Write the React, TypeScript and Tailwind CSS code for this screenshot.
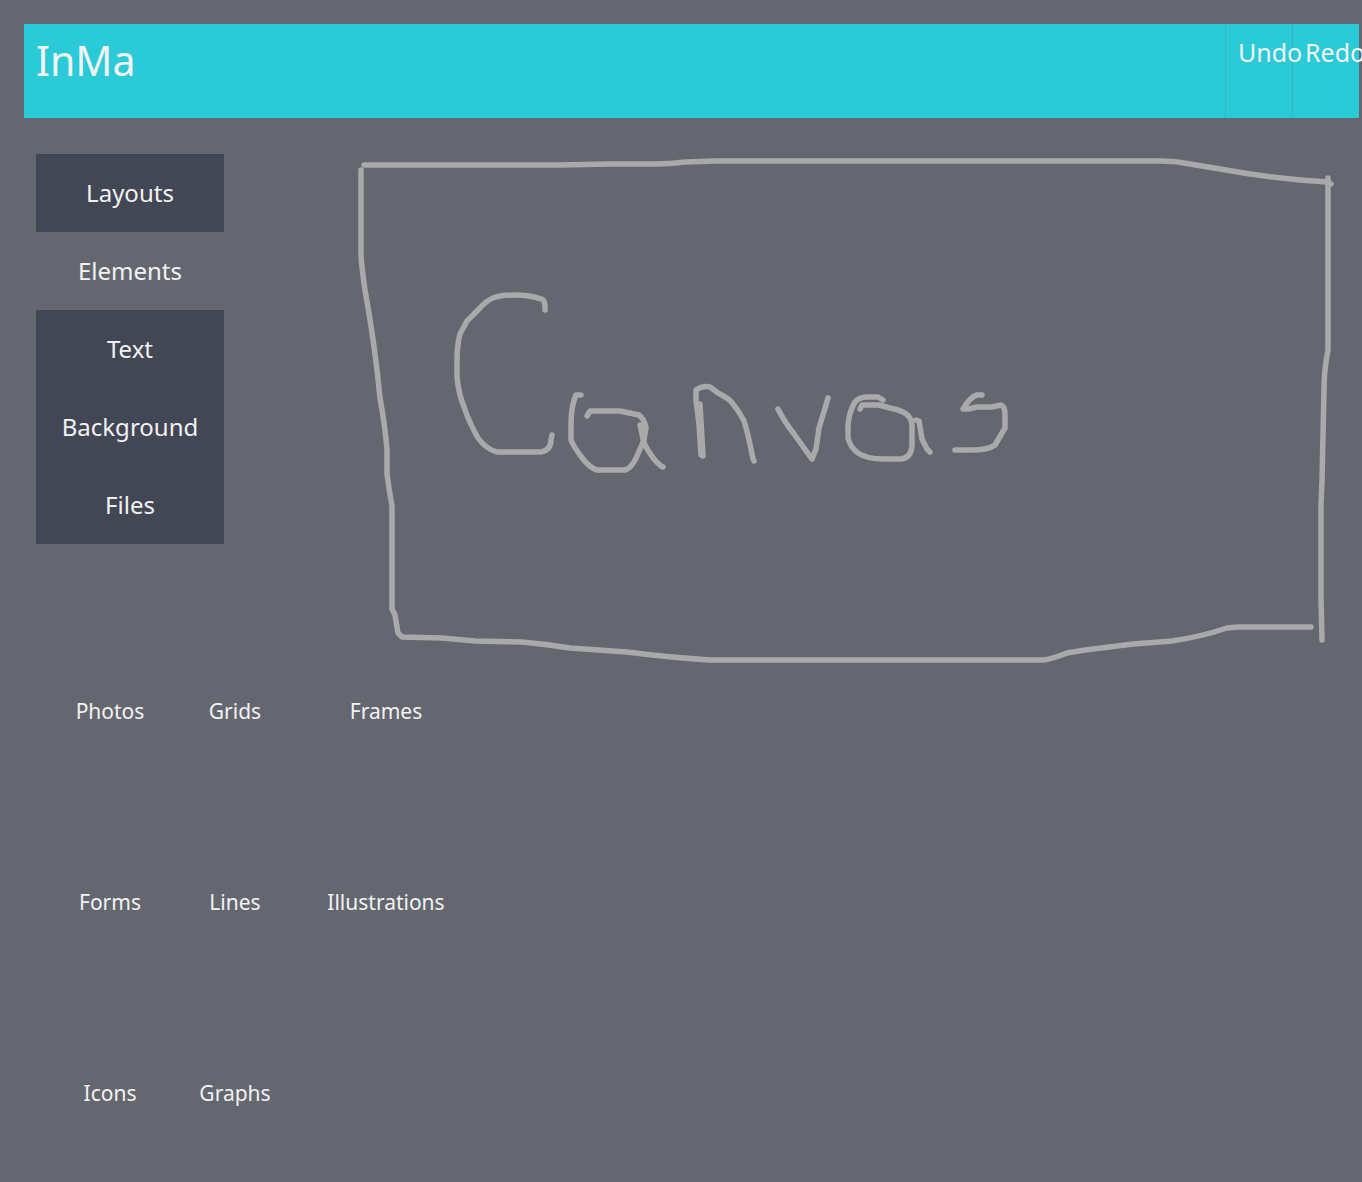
import { useState } from "react";

const sections = ["Layouts", "Elements", "Text", "Background", "Files"];
const elements = ["Photos", "Grids", "Frames", "Forms", "Lines", "Illustrations", "Icons", "Graphs"];

// Freehand strokes: the outline of the drawing area, then its label.
const strokes = [
  "M364 165 L390 165 L465 165 L560 165 L610 164 L655 164 Q670 164 685 162 L715 161 L850 161 L1160 161 Q1174 161 1184 163 L1250 174 Q1290 180 1328 182 L1331 184",
  "M1328 178 L1328 350 Q1324 370 1324 390 L1322 480 L1321 505 L1321 598 L1322 640",
  "M361 170 L361 255 Q362 270 365 290 Q375 345 380 398 Q385 425 387 450 L387 474 Q389 490 392 506 L392 609 L395 615 L398 633 L402 637 L442 638 L475 641 L522 642 Q545 644 570 648 L627 652 Q665 657 710 660 L1044 660 Q1052 659 1067 653 L1085 650 L1133 644 L1172 641 Q1200 637 1227 628 L1238 627 L1311 627",
  "M545 310 L545 305 Q544 299 541 299 Q530 295 515 295 Q500 295 493 298 Q486 301 480 308 L467 321 L460 334 Q457 346 457 360 L457 376 Q458 392 464 407 Q469 422 478 438 Q486 449 497 452 L541 452 Q551 450 551 440 L552 435",
  "M581 395 L576 395 Q571 406 571 425 L571 440 Q573 446 583 459 Q590 468 597 470 L625 470 Q632 468 637 456 L644 440 L646 427 Q644 419 639 415 L620 411 L590 411 L587 416",
  "M640 425 L644 443 Q652 459 661 466 L663 467",
  "M700 404 L703 456 L701 455 L699 424 L696 400 L696 390 Q703 385 710 387 L718 393 Q730 399 733 404 Q739 411 744 421 Q748 433 753 459 L754 461",
  "M778 409 Q784 421 794 434 L812 459 L816 449 L819 428 L826 405 L828 398",
  "M883 400 L878 397 L867 397 Q859 397 855 402 Q849 412 848 425 L848 438 Q850 447 858 453 Q867 459 883 459 L901 459 Q911 458 912 446 L912 424 Q911 416 903 412 Q897 409 890 408 L879 405 L862 405 L860 409",
  "M916 420 L919 421 L922 439 L927 449 L930 452",
  "M982 395 L977 395 Q970 397 963 409 L968 409 L977 407 L992 407 L1001 405 Q1005 407 1005 414 L1005 428 L995 445 Q988 450 972 450 L955 450",
];

export default function App() {
  const [active, setActive] = useState("Elements");
  return (
    <div className="min-h-screen overflow-x-clip bg-[#656770] pt-6 font-['Noto_Sans',sans-serif] text-[#f2f2f2]">
      <header className="mr-[3px] ml-6 grid grid-cols-[1fr_67px_67px] bg-[#2acbd7]">
        <h1 className="px-3 pt-1 pb-[26px] text-[41px] leading-[64px]">InMa</h1>
        <button className="z-10 flex items-start border-l border-[#38b3bf] pt-2 pl-3 text-[25px] leading-10 whitespace-nowrap">
          Undo
        </button>
        <button className="flex items-start border-l border-[#38b3bf] pt-2 pl-3 text-[25px] leading-10 whitespace-nowrap">
          Redo
        </button>
      </header>
      <main className="pt-6 pb-16">
        <div className="flex items-start gap-[124px] pr-3 pl-9">
          <nav className="mt-3 flex w-[188px] shrink-0 flex-col text-2xl">
            {sections.map((s) => (
              <button
                key={s}
                onClick={() => setActive(s)}
                className={s === active ? "h-[78px]" : "h-[78px] bg-[#424755]"}
              >
                {s}
              </button>
            ))}
          </nav>
          <svg
            viewBox="348 142 1002 530"
            className="min-w-0 flex-1"
            role="img"
            aria-label="Canvas"
            fill="none"
            stroke="#a9a9a9"
            strokeWidth="5.5"
            strokeLinecap="round"
            strokeLinejoin="round"
          >
            {strokes.map((d) => (
              <path key={d} d={d} />
            ))}
          </svg>
        </div>
        <div className="grid grid-cols-[148px_102px_200px] gap-y-[167px] pt-[27px] pl-9 text-[21px] leading-6">
          {elements.map((e) => (
            <button key={e}>{e}</button>
          ))}
        </div>
      </main>
    </div>
  );
}
